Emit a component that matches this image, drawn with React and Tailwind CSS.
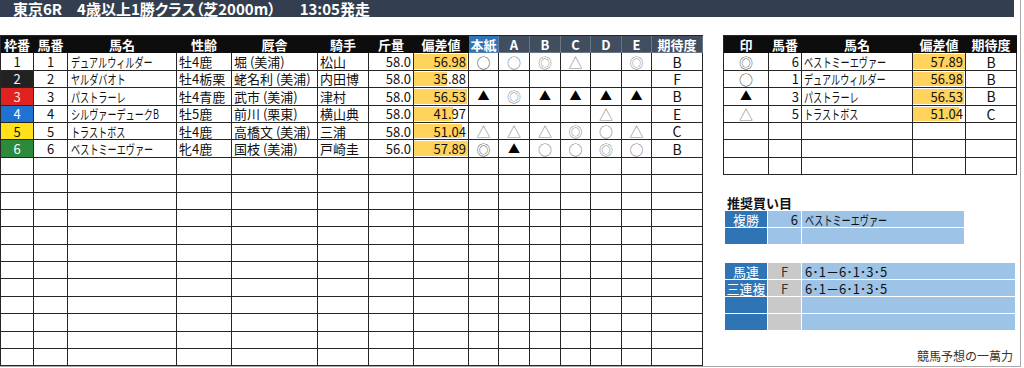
const FONT = { fontFamily: '"Noto Sans CJK JP", "Noto Sans", sans-serif' }

const WAKU = {
  1: 'bg-white text-[#111]',
  2: 'bg-[#222222] text-white',
  3: 'bg-[#e0231e] text-[#ffe4e4]',
  4: 'bg-[#1f72d2] text-white',
  5: 'bg-[#ffe21a] text-[#111]',
  6: 'bg-[#2c8a3c] text-white',
}

const HORSES = [
  { waku: 1, no: 1, name: 'デュアルウィルダー', sex: '牡4鹿', stable: '堀 (美浦)', jockey: '松山', kg: '58.0', dev: 56.98, marks: ['○', '○', '◎', '△', '', '◎'], rank: 'B' },
  { waku: 2, no: 2, name: 'ヤルダバオト', sex: '牡4栃栗', stable: '蛯名利 (美浦)', jockey: '内田博', kg: '58.0', dev: 35.88, marks: ['', '', '', '', '', ''], rank: 'F' },
  { waku: 3, no: 3, name: 'パストラーレ', sex: '牡4青鹿', stable: '武市 (美浦)', jockey: '津村', kg: '58.0', dev: 56.53, marks: ['▲', '◎', '▲', '▲', '▲', '▲'], rank: 'B' },
  { waku: 4, no: 4, name: 'シルヴァーデュークB', sex: '牡5鹿', stable: '前川 (栗東)', jockey: '横山典', kg: '58.0', dev: 41.97, marks: ['', '', '', '', '△', ''], rank: 'E' },
  { waku: 5, no: 5, name: 'トラストボス', sex: '牡4鹿', stable: '高橋文 (美浦)', jockey: '三浦', kg: '58.0', dev: 51.04, marks: ['△', '△', '△', '◎', '○', '△'], rank: 'C' },
  { waku: 6, no: 6, name: 'ベストミーエヴァー', sex: '牝4鹿', stable: '国枝 (美浦)', jockey: '戸崎圭', kg: '56.0', dev: 57.89, marks: ['◎', '▲', '○', '○', '◎', '○'], rank: 'B' },
]

const PICKS = [
  { mark: '◎', no: 6, name: 'ベストミーエヴァー', dev: 57.89, rank: 'B' },
  { mark: '○', no: 1, name: 'デュアルウィルダー', dev: 56.98, rank: 'B' },
  { mark: '▲', no: 3, name: 'パストラーレ', dev: 56.53, rank: 'B' },
  { mark: '△', no: 5, name: 'トラストボス', dev: 51.04, rank: 'C' },
]

const MAX_DEV = 57.89

const cell = 'border-r border-b border-[#262626] flex items-center whitespace-nowrap'
const head = 'border-r border-b border-[#0d0d0d] bg-[#0d0d0d] text-white font-bold flex items-center justify-center'

function markClass(m, main) {
  if (m === '▲') return 'text-black text-[12px]'
  if (m === '△') return 'text-[#8a8a8a] text-[14px]'
  if (m === '◎') return `${main ? 'text-[#555]' : 'text-[#8a8a8a]'} text-[14px]`
  return `${main ? 'text-[#444]' : 'text-[#777]'} text-[14px]`
}

function Kana({ children }) {
  return <span className="inline-block origin-left scale-x-[0.7]">{children}</span>
}

function DevBar({ value }) {
  return (
    <div className={`${cell} relative justify-end pr-[2px]`}>
      <div
        className="absolute left-0 top-[1px] bottom-[1px] bg-[#ffd35c]"
        style={{ width: `${(value / MAX_DEV) * 100}%` }}
      />
      <span className="relative">{value.toFixed(2)}</span>
    </div>
  )
}

function MainTable() {
  const empty = Array.from({ length: 12 })
  return (
    <div className="grid grid-cols-[33px_34px_109px_55px_86px_51px_45px_55px_30px_31px_31px_30px_31px_30px_51px] auto-rows-[17.4px] border-l border-t border-[#262626] text-[13px] leading-none text-[#111] w-[703px]">
      {['枠番', '馬番', '馬名', '性齢', '厩舎', '騎手', '斤量', '偏差値'].map(h => (
        <div key={h} className={head}>{h}</div>
      ))}
      <div className="border-r border-b border-[#5a7fa8] bg-[#2f75b6] text-white font-bold flex items-center justify-center">本紙</div>
      {['A', 'B', 'C', 'D', 'E', '期待度'].map(h => (
        <div key={h} className="border-r border-b border-[#6a7584] bg-[#414e60] text-white font-bold flex items-center justify-center">{h}</div>
      ))}

      {HORSES.map(h => (
        <div key={h.no} className="contents">
          <div className={`${cell} justify-center ${WAKU[h.waku]}`}>{h.waku}</div>
          <div className={`${cell} justify-center`}>{h.no}</div>
          <div className={`${cell} pl-[3px] overflow-hidden`}><Kana>{h.name}</Kana></div>
          <div className={`${cell} pl-[2px]`}>{h.sex}</div>
          <div className={`${cell} pl-[2px]`}>{h.stable}</div>
          <div className={`${cell} pl-[2px]`}>{h.jockey}</div>
          <div className={`${cell} justify-end pr-[2px]`}>{h.kg}</div>
          <DevBar value={h.dev} />
          {h.marks.map((m, i) => (
            <div key={i} className={`${cell} justify-center ${markClass(m, i === 0)}`}>{m}</div>
          ))}
          <div className={`${cell} justify-center text-[14px]`}>{h.rank}</div>
        </div>
      ))}

      {empty.map((_, r) =>
        Array.from({ length: 15 }).map((__, c) => <div key={`${r}-${c}`} className={cell} />)
      )}
    </div>
  )
}

function PickTable() {
  return (
    <div className="grid grid-cols-[45px_33px_111px_53px_51px] auto-rows-[17.4px] border-l border-t border-[#262626] text-[13px] leading-none text-[#111] w-[294px]">
      {['印', '馬番', '馬名', '偏差値', '期待度'].map(h => (
        <div key={h} className={head}>{h}</div>
      ))}
      {PICKS.map(p => (
        <div key={p.no} className="contents">
          <div className={`${cell} justify-center ${markClass(p.mark, true)}`}>{p.mark}</div>
          <div className={`${cell} justify-end pr-[2px]`}>{p.no}</div>
          <div className={`${cell} pl-[2px] overflow-hidden`}><Kana>{p.name}</Kana></div>
          <DevBar value={p.dev} />
          <div className={`${cell} justify-center text-[14px]`}>{p.rank}</div>
        </div>
      ))}
      {Array.from({ length: 3 }).map((_, r) =>
        Array.from({ length: 5 }).map((__, c) => <div key={`${r}-${c}`} className={cell} />)
      )}
    </div>
  )
}

function BetBox({ rows, wide, mid }) {
  return (
    <div className={`ml-[2px] flex flex-col gap-[1px] ${wide ? 'w-[290px]' : 'w-[239px]'}`}>
      {rows.map((r, i) => (
        <div key={i} className="flex h-[16px] gap-[1px] text-[13px] leading-none">
          <div className="w-[42px] bg-[#2f75b6] text-white flex items-center justify-center whitespace-nowrap">{r[0]}</div>
          <div className={`w-[33px] flex items-center ${mid === 'gray' ? 'bg-[#c9c9c9] justify-center text-[#333]' : 'bg-[#9dc3e6] justify-end pr-[3px] text-[#111]'}`}>{r[1]}</div>
          <div className="flex-1 bg-[#9dc3e6] flex items-center pl-[3px] text-[#111] whitespace-nowrap">
            {mid === 'gray' ? r[2] : <Kana>{r[2]}</Kana>}
          </div>
        </div>
      ))}
    </div>
  )
}

export default function App() {
  return (
    <div className="w-[1021px] h-[367px] bg-white border-r border-b border-[#a8a8a8] flex flex-col" style={FONT}>
      <div className="h-[17px] w-[1014px] bg-[#333f50] text-white text-[15px] font-semibold leading-[17px] flex whitespace-nowrap [font-feature-settings:'palt']">
        <span className="ml-[13px]">東京6R</span>
        <span className="ml-[15px]">4歳以上1勝クラス（芝2000m）</span>
        <span className="ml-[24px]">13:05発走</span>
      </div>

      <div className="mt-[18px] flex gap-[20px]">
        <MainTable />

        <div className="flex flex-col w-[294px]">
          <PickTable />
          <p className="mt-[20px] ml-[4px] text-[13px] font-bold leading-[16px] text-[#111]">推奨買い目</p>
          <div>
            <BetBox rows={[['複勝', '6', 'ベストミーエヴァー'], ['', '', '']]} />
          </div>
          <div className="mt-[19px]">
            <BetBox
              wide
              mid="gray"
              rows={[
                ['馬連', 'F', '6･1－6･1･3･5'],
                ['三連複', 'F', '6･1－6･1･3･5'],
                ['', '', ''],
                ['', '', ''],
              ]}
            />
          </div>
          <p className="mt-[18px] pr-[4px] text-right text-[12px] leading-[16px] text-[#333]">競馬予想の一萬力</p>
        </div>
      </div>
    </div>
  )
}
